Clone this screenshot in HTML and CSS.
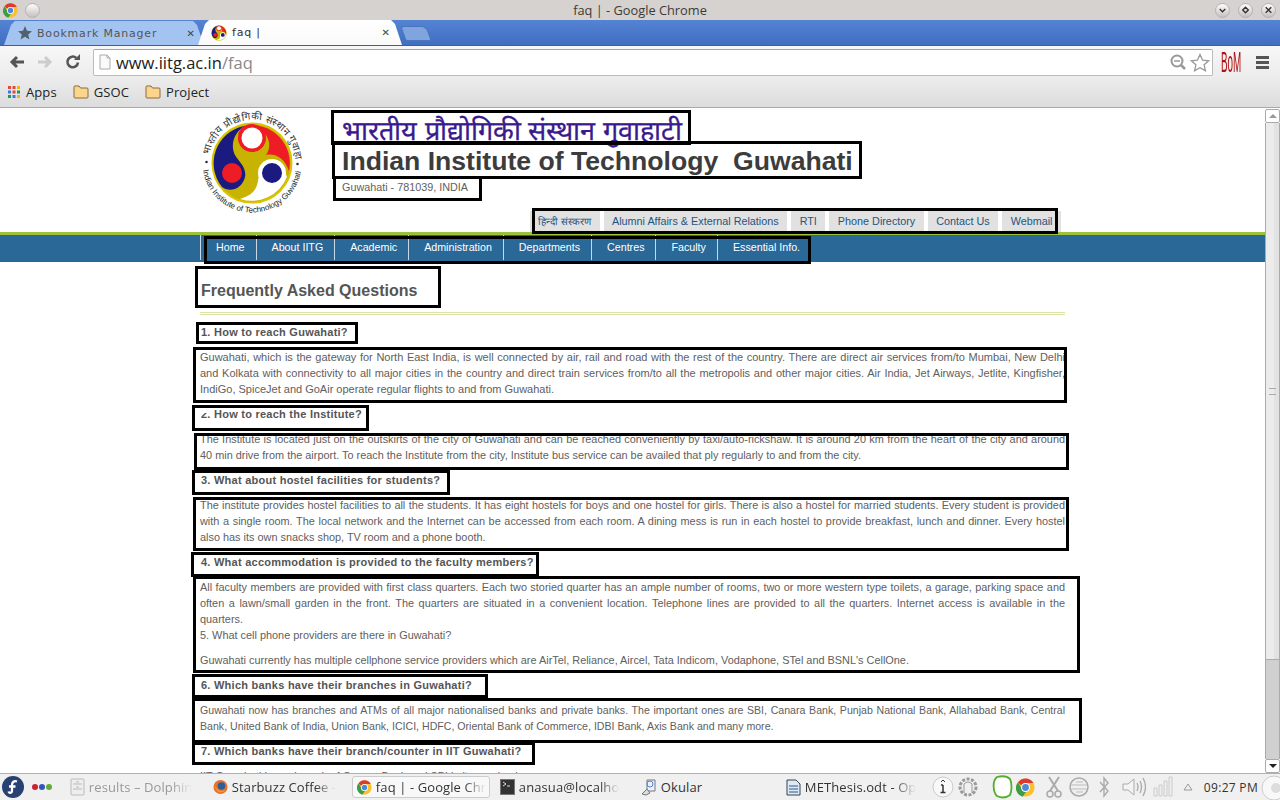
FILE: index.html
```html
<!DOCTYPE html>
<html lang="en">
<head>
    <meta charset="UTF-8">
    <title>faq | - Google Chrome</title>
    <link rel="stylesheet" href="styles.css">
</head>
<body>
    <svg class="defs" width="0" height="0">
        <symbol id="chrome" viewBox="0 0 24 24">
            <circle cx="12" cy="12" r="11.5" fill="#fbc02d"/>
            <path d="M12 .5a11.500 11.500 0 0 1 10 5.800H12a5.700 5.700 0 0 0-5.200 3.300L2.500 5.300A11.500 11.500 0 0 1 12 .5z" fill="#dd3b2f"/>
            <path d="M2.500 5.300l4.300 7.600a5.700 5.700 0 0 0 5.700 4.800l-4 6A11.500 11.500 0 0 1 2.500 5.300z" fill="#3b9e46"/>
            <circle cx="12" cy="12" r="5.600" fill="#fff"/>
            <circle cx="12" cy="12" r="4.300" fill="#4a89dc"/>
        </symbol>
        <symbol id="folder" viewBox="0 0 16 14">
            <path d="M1 3V2q0-1 1-1h4l1.500 2H14q1 0 1 1v8q0 1-1 1H2q-1 0-1-1z" fill="#fbd58c" stroke="#8d6a3c"/>
        </symbol>
        <symbol id="iitg-mark" viewBox="0 0 104 104">
            <circle cx="52" cy="53" r="39.500" fill="#c8b400" stroke="#d8c400" stroke-width="2"/>
            <path d="M44 16A38 38 0 0 1 89 61C85 49 76 43 66 45A15 15 0 0 0 38 25C39 21 41 18 44 16z" fill="#ee1c25"/>
            <circle cx="52" cy="28" r="14" fill="#ee1c25"/>
            <circle cx="52" cy="28" r="10.500" fill="#fff"/>
            <path d="M44 16A38 38 0 0 0 22 77C30 83 42 79 45 67C47 57 38 51 35 45C30 35 34 23 44 16z" fill="#1a1a80"/>
            <circle cx="32" cy="63" r="10" fill="#ee1c25"/>
            <path d="M40 89C52 85 56 81 58 71A15 15 0 0 1 87 67A38 38 0 0 1 40 89z" fill="#fff"/>
            <circle cx="72" cy="63" r="14" fill="#fff"/>
            <circle cx="72" cy="63" r="10" fill="#1a1a80"/>
        </symbol>
    </svg>

    <div class="window">
        <div class="titlebar">
            <svg class="title-icon" width="15" height="15"><use href="#chrome"/></svg>
            <span class="win-btn win-pin"></span>
            <span class="title-text">faq | - Google Chrome</span>
            <span class="win-btn">
                <svg width="14" height="14" viewBox="0 0 14 14"><path d="M4 6l3 3 3-3" fill="none" stroke="#333" stroke-width="1.500"/></svg>
            </span>
            <span class="win-btn">
                <svg width="14" height="14" viewBox="0 0 14 14"><path d="M7 4l3 3-3 3-3-3z" fill="none" stroke="#333" stroke-width="1.500"/></svg>
            </span>
            <span class="win-btn">
                <svg width="14" height="14" viewBox="0 0 14 14"><path d="M4 4l6 6M10 4l-6 6" fill="none" stroke="#333" stroke-width="1.500"/></svg>
            </span>
        </div>

        <div class="tabstrip">
            <div class="tab tab-back">
                <svg width="14" height="14" viewBox="0 0 14 14"><path d="M7 0l2 4.800 5 .4-3.800 3.300 1.200 5L7 10.800l-4.400 2.700 1.200-5L0 5.200l5-.4z" fill="#55606e"/></svg>
                <span class="tab-label">Bookmark Manager</span>
                <span class="tab-close">✕</span>
            </div>
            <div class="tab tab-active">
                <svg class="favicon" width="16" height="16" viewBox="10 11 84 84"><use href="#iitg-mark" width="104" height="104"/></svg>
                <span class="tab-label">faq |</span>
                <span class="tab-close">✕</span>
            </div>
            <div class="tab-new"></div>
        </div>

        <div class="toolbar">
            <svg class="tool" width="18" height="16" viewBox="0 0 18 16"><path d="M16 8H5M9 3L4 8l5 5" fill="none" stroke="#555" stroke-width="3"/></svg>
            <svg class="tool" width="18" height="16" viewBox="0 0 18 16"><path d="M2 8h11M9 3l5 5-5 5" fill="none" stroke="#ccc" stroke-width="3"/></svg>
            <svg class="tool" width="18" height="16" viewBox="0 0 18 16"><path d="M14 8.500A5.300 5.300 0 1 1 12.300 4" fill="none" stroke="#555" stroke-width="2.500"/><path d="M10 6h6V0z" fill="#555"/></svg>
            <div class="omnibox">
                <svg width="12" height="16" viewBox="0 0 12 16"><path d="M1 1h7l3 3v11H1z" fill="#fafafa" stroke="#aaa"/><path d="M8 1v3h3" fill="none" stroke="#aaa"/></svg>
                <span class="url">www.iitg.ac.in<span class="url-path">/faq</span></span>
                <svg width="18" height="18" viewBox="0 0 18 18"><circle cx="8" cy="8" r="5.500" fill="none" stroke="#999" stroke-width="2"/><path d="M12 12l4 4" stroke="#999" stroke-width="2.500"/><path d="M5 8h6" stroke="#999" stroke-width="1.500"/></svg>
                <svg width="20" height="19" viewBox="0 0 20 19"><path d="M10 1.500l2.600 5.700 6 .6-4.500 4 1.300 6L10 14.700l-5.400 3.100 1.300-6-4.500-4 6-.6z" fill="#fff" stroke="#999" stroke-width="1.300"/></svg>
            </div>
            <span class="bom">BoM</span>
            <span class="menu-lines"><i></i><i></i><i></i></span>
        </div>

        <div class="bookmarks">
            <span class="bookmark">
                <svg width="14" height="14" viewBox="0 0 14 14">
                    <rect x="1" y="1" width="3" height="3" fill="#dd4b39"/><rect x="5.500" y="1" width="3" height="3" fill="#dd4b39"/><rect x="10" y="1" width="3" height="3" fill="#f4b400"/>
                    <rect x="1" y="5.500" width="3" height="3" fill="#3b78e7"/><rect x="5.500" y="5.500" width="3" height="3" fill="#dd4b39"/><rect x="10" y="5.500" width="3" height="3" fill="#0f9d58"/>
                    <rect x="1" y="10" width="3" height="3" fill="#0f9d58"/><rect x="5.500" y="10" width="3" height="3" fill="#3b78e7"/><rect x="10" y="10" width="3" height="3" fill="#f4b400"/>
                </svg>
                <span>Apps</span>
            </span>
            <span class="bookmark"><svg width="16" height="14"><use href="#folder"/></svg><span>GSOC</span></span>
            <span class="bookmark"><svg width="16" height="14"><use href="#folder"/></svg><span>Project</span></span>
        </div>

        <div class="viewport">
            <div class="page">
                <div class="site-head">
                    <svg class="site-logo" width="104" height="104" viewBox="0 0 104 104">
                        <use href="#iitg-mark" width="104" height="104"/>
                        <path id="ring-top" d="M9.700 45A43 43 0 0 1 94.900 50" fill="none"/>
                        <path id="ring-bottom" d="M3 60A49.500 49.500 0 0 0 101 60" fill="none"/>
                        <circle cx="6.500" cy="52" r="1.300" fill="#333"/>
                        <circle cx="97.500" cy="54" r="1.300" fill="#333"/>
                        <text class="logo-text"><textPath href="#ring-top">भारतीय प्रौद्योगिकी संस्थान गुवाहाटी</textPath></text>
                        <text class="logo-text logo-text-en"><textPath href="#ring-bottom">Indian Institute of Technology Guwahati</textPath></text>
                    </svg>
                    <div class="site-names">
                        <div class="name-hi">भारतीय प्रौद्योगिकी संस्थान गुवाहाटी</div>
                        <div class="name-en">Indian Institute of Technology&nbsp; Guwahati</div>
                        <div class="name-addr">Guwahati - 781039, INDIA</div>
                    </div>
                </div>
                <div class="top-links">
                    <a class="link-hi">हिन्दी संस्करण</a>
                    <a>Alumni Affairs &amp; External Relations</a>
                    <a>RTI</a>
                    <a>Phone Directory</a>
                    <a>Contact Us</a>
                    <a>Webmail</a>
                </div>
                <div class="main-nav">
                    <div class="main-nav-inner">
                        <a>Home</a>
                        <a>About IITG</a>
                        <a>Academic</a>
                        <a>Administration</a>
                        <a>Departments</a>
                        <a>Centres</a>
                        <a>Faculty</a>
                        <a>Essential Info.</a>
                    </div>
                </div>
                <div class="content">
                    <h1>Frequently Asked Questions</h1>
                    <div class="rule"></div>
                    <h3>1. How to reach Guwahati?</h3>
                    <p class="answer-wide">Guwahati, which is the gateway for North East India, is well connected by air, rail and road with the rest of the country. There are direct air services from/to Mumbai, New Delhi and Kolkata with connectivity to all major cities in the country and direct train services from/to all the metropolis and other major cities. Air India, Jet Airways, Jetlite, Kingfisher, IndiGo, SpiceJet and GoAir operate regular flights to and from Guwahati.</p>
                    <h3>2. How to reach the Institute?</h3>
                    <p>The Institute is located just on the outskirts of the city of Guwahati and can be reached conveniently by taxi/auto-rickshaw. It is around 20 km from the heart of the city and around 40 min drive from the airport. To reach the Institute from the city, Institute bus service can be availed that ply regularly to and from the city.</p>
                    <h3>3. What about hostel facilities for students?</h3>
                    <p>The institute provides hostel facilities to all the students. It has eight hostels for boys and one hostel for girls. There is also a hostel for married students. Every student is provided with a single room. The local network and the Internet can be accessed from each room. A dining mess is run in each hostel to provide breakfast, lunch and dinner. Every hostel also has its own snacks shop, TV room and a phone booth.</p>
                    <h3>4. What accommodation is provided to the faculty members?</h3>
                    <p>All faculty members are provided with first class quarters. Each two storied quarter has an ample number of rooms, two or more western type toilets, a garage, parking space and often a lawn/small garden in the front. The quarters are situated in a convenient location. Telephone lines are provided to all the quarters. Internet access is available in the quarters.<br>5. What cell phone providers are there in Guwahati?</p>
                    <p>Guwahati currently has multiple cellphone service providers which are AirTel, Reliance, Aircel, Tata Indicom, Vodaphone, STel and BSNL's CellOne.</p>
                    <h3>6. Which banks have their branches in Guwahati?</h3>
                    <p class="answer-tight">Guwahati now has branches and ATMs of all major nationalised banks and private banks. The important ones are SBI, Canara Bank, Punjab National Bank, Allahabad Bank, Central Bank, United Bank of India, Union Bank, ICICI, HDFC, Oriental Bank of Commerce, IDBI Bank, Axis Bank and many more.</p>
                    <h3>7. Which banks have their branch/counter in IIT Guwahati?</h3>
                    <p>IIT Guwahati has a branch of Canara Bank and SBI in its academic area.</p>
                </div>

                <div class="mark-patch"></div>
                <div class="mark mark-hi"></div>
                <div class="mark mark-en"></div>
                <div class="mark mark-addr"></div>
                <div class="mark mark-links"></div>
                <div class="mark mark-nav"></div>
                <div class="mark mark-title"></div>
                <div class="mark mark-q1"></div>
                <div class="mark mark-a1"></div>
                <div class="mark mark-q2"></div>
                <div class="mark mark-a2"></div>
                <div class="mark mark-q3"></div>
                <div class="mark mark-a3"></div>
                <div class="mark mark-q4"></div>
                <div class="mark mark-a4"></div>
                <div class="mark mark-q6"></div>
                <div class="mark mark-a6"></div>
                <div class="mark mark-q7"></div>
            </div>
            <div class="scrollbar">
                <div class="sb-btn"><i class="sb-up"></i></div>
                <div class="sb-thumb"><span class="sb-grip"></span></div>
                <div class="sb-track"></div>
                <div class="sb-btn"><i class="sb-down"></i></div>
            </div>
        </div>

        <div class="taskbar">
            <svg class="fedora" width="22" height="22" viewBox="0 0 22 22"><circle cx="11" cy="11" r="11" fill="#294172"/><path d="M15 5.500c-3-1-5 .5-5 3.500v6c0 2-3 2.500-3.500.5M7 10.500h6.500" fill="none" stroke="#fff" stroke-width="2.300"/></svg>
            <span class="dots"><i class="dot-red"></i><i class="dot-blue"></i><i class="dot-green"></i></span>
            <div class="task task-dolphin">
                <svg width="15" height="18" viewBox="0 0 15 18"><rect x="1" y="1" width="13" height="16" rx="1" fill="#eee" stroke="#bbb"/><path d="M3 6h9M3 11h9M6 4h3M6 9h3" stroke="#bbb"/></svg>
                <span class="task-label task-dim">results – Dolphin</span>
            </div>
            <div class="task task-firefox">
                <svg width="15" height="16" viewBox="0 0 16 16"><circle cx="8" cy="8" r="7.500" fill="#e8712a"/><circle cx="9" cy="7" r="4" fill="#2f5d9b"/><path d="M2 5c1 6 6 9 11 6-3 5-11 3-11-6z" fill="#f6a02c"/></svg>
                <span class="task-label">Starbuzz Coffee -</span>
            </div>
            <div class="task task-chrome">
                <svg width="15" height="15"><use href="#chrome"/></svg>
                <span class="task-label">faq | - Google Chr</span>
            </div>
            <div class="task task-term">
                <svg width="15" height="16" viewBox="0 0 15 16"><rect x=".5" y=".5" width="14" height="15" fill="#333" stroke="#777"/><path d="M3 3l3 2-3 2M7 7h3" fill="none" stroke="#ddd"/></svg>
                <span class="task-label">anasua@localho</span>
            </div>
            <div class="task task-okular">
                <svg width="16" height="17" viewBox="0 0 16 17"><path d="M6 1h8v11H6z" fill="#eef" stroke="#777"/><circle cx="9" cy="5" r="3" fill="none" stroke="#4a89dc"/><path d="M1 15l5-5 3 4-4 2z" fill="#ddd" stroke="#777"/></svg>
                <span class="task-label task-plain">Okular</span>
            </div>
            <div class="task task-odt">
                <svg width="15" height="17" viewBox="0 0 15 17"><path d="M1 1h9l4 4v11H1z" fill="#dfe9f3" stroke="#345"/><path d="M3 7h9M3 10h9M3 13h9" stroke="#245a8c"/></svg>
                <span class="task-label">METhesis.odt - Op</span>
            </div>
            <div class="tray">
                <svg width="22" height="22" viewBox="0 0 22 22"><circle cx="11" cy="11" r="10" fill="#f8f8f8" stroke="#ccc"/><path d="M11 9v7M8.500 16.500h5M9 9h2" stroke="#333" stroke-width="1.500"/><path d="M9 6l2-2 2 2" fill="none" stroke="#333"/></svg>
                <svg class="tray-gear" width="22" height="22" viewBox="0 0 22 22"><circle cx="11" cy="11" r="8" fill="none" stroke="#999" stroke-width="3" stroke-dasharray="3 1.500"/><path d="M7 17V8q4-4 8 0v9" fill="none" stroke="#999"/></svg>
                <svg class="tray-skype" width="22" height="24" viewBox="0 0 22 24"><path d="M6 2c4-1 10-1 13 2 2 4 2 12 0 16-4 3-9 3-13 1-4-4-5-15 0-19z" fill="#fff" stroke="#55ad2c" stroke-width="1.800"/></svg>
                <svg class="tray-chrome" width="19" height="19"><use href="#chrome"/></svg>
                <svg class="tray-cut" width="16" height="22" viewBox="0 0 16 22"><path d="M3 1l9 14M13 1L4 15" stroke="#aaa" stroke-width="2"/><circle cx="4" cy="18" r="3" fill="none" stroke="#aaa" stroke-width="1.500"/><circle cx="12" cy="18" r="3" fill="none" stroke="#aaa" stroke-width="1.500"/></svg>
                <svg width="20" height="20" viewBox="0 0 20 20"><circle cx="10" cy="10" r="9" fill="none" stroke="#aaa" stroke-width="1.500"/><path d="M2 8h16M2 12h16M7 5h7M7 15h7" stroke="#bbb"/></svg>
                <svg class="tray-bt" width="10" height="22" viewBox="0 0 10 22"><path d="M1 6l8 9-4 5V2l4 5-8 9" fill="none" stroke="#aaa" stroke-width="1.400"/></svg>
                <svg class="tray-vol" width="24" height="22" viewBox="0 0 24 22"><path d="M1 8h5l6-5v16l-6-5H1z" fill="#f4f4f4" stroke="#aaa"/><path d="M15 7q2 4 0 8M18 5q3 6 0 12M21 2q5 9 0 18" fill="none" stroke="#aaa" stroke-width="1.300"/></svg>
                <svg width="20" height="22" viewBox="0 0 20 22"><path d="M1 12h3v8H1zM6 9h3v11H6zM11 5h3v15h-3zM16 1h3v19h-3z" fill="#eee" stroke="#ccc"/></svg>
                <svg class="tray-up" width="10" height="8" viewBox="0 0 10 8"><path d="M1 7l4-6 4 6z" fill="none" stroke="#999"/></svg>
                <span class="clock">09:27 PM</span>
                <svg class="gauge" width="20" height="25" viewBox="0 0 20 25"><circle cx="14" cy="13" r="12" fill="#f8f8f8" stroke="#ccc"/><circle cx="16" cy="13" r="5" fill="#ddd"/></svg>
            </div>
        </div>
    </div>
</body>
</html>
```

FILE: styles.css
```css
* {
    box-sizing: border-box;
    margin: 0;
    padding: 0;
}

html, body {
    height: 100%;
    overflow: hidden;
}

body {
    font-family: "Liberation Sans", Arial, sans-serif;
    background: #fff;
}

.defs {
    position: absolute;
}

.window {
    width: 1280px;
    height: 800px;
    display: flex;
    flex-direction: column;
}

/* browser chrome */
.titlebar {
    height: 20px;
    background: #d6d2cf;
    display: flex;
    align-items: center;
    padding: 0 4px 0 3px;
    gap: 8px;
    flex-shrink: 0;
}

.title-icon {
    flex-shrink: 0;
}

.title-text {
    flex: 1;
    text-align: center;
    font: 12.800px "Open Sans", sans-serif;
    color: #3a3a3a;
    padding-left: 25px;
}

.win-btn {
    width: 15px;
    height: 15px;
    border-radius: 50%;
    background: linear-gradient(#fdfdfd, #c4c1be);
    border: 1px solid #b5b2af;
    display: flex;
    align-items: center;
    justify-content: center;
    flex-shrink: 0;
}

.win-pin {
    margin-left: -1px;
}

.tabstrip {
    height: 26px;
    background: linear-gradient(#5583d4, #3f6ec2);
    border-bottom: 1px solid #3560a8;
    display: flex;
    align-items: flex-end;
    padding-left: 4px;
    flex-shrink: 0;
}

.tab {
    height: 24px;
    display: flex;
    align-items: center;
    gap: 5px;
    font: 11px "DejaVu Sans", sans-serif;
    letter-spacing: 0.8px;
    clip-path: polygon(0 100%, 7px 4px, 11px 0, calc(100% - 11px) 0, calc(100% - 7px) 4px, 100% 100%);
}

.tab-back {
    width: 200px;
    padding: 0 9px 0 14px;
    background: #a3c4f0;
    color: #555;
}

.tab-active {
    width: 204px;
    margin-left: -6px;
    padding: 0 12px 0 13px;
    background: linear-gradient(#fff, #fafafa);
    color: #333;
    height: 25px;
}

.favicon {
    flex-shrink: 0;
}

.tab-label {
    flex: 1;
    white-space: nowrap;
}

.tab-close {
    font-size: 10px;
    letter-spacing: 0;
    color: #444;
}

.tab-new {
    width: 26px;
    height: 15px;
    margin: 0 0 4px 1px;
    background: #7fa4de;
    border: 1px solid #4a74bb;
    border-radius: 3px 5px 2px 2px;
    transform: skewX(20deg);
}

.toolbar {
    height: 32px;
    background: linear-gradient(#f7f7f7, #ececec);
    display: flex;
    align-items: center;
    padding: 0 9px 0 8px;
    flex-shrink: 0;
}

.tool {
    margin-right: 10px;
    flex-shrink: 0;
}

.omnibox {
    width: 1120px;
    height: 27px;
    margin-left: 1px;
    background: #fff;
    border: 1px solid #bbb;
    border-top-color: #a5a5a5;
    border-radius: 2px;
    display: flex;
    align-items: center;
    gap: 3px;
    padding: 0 2px 0 5px;
    flex-shrink: 0;
}

.url {
    flex: 1;
    margin-left: 2px;
    font: 16.500px "Open Sans", sans-serif;
    color: #222;
}

.url-path {
    color: #888;
}

.bom {
    margin-left: 8px;
    width: 21px;
    font: 29px/1 "Liberation Sans", sans-serif;
    color: #b01010;
    transform: scaleX(0.34);
    transform-origin: left center;
}

.menu-lines {
    margin-left: 14px;
    display: flex;
    flex-direction: column;
    gap: 2px;
}

.menu-lines i {
    display: block;
    width: 13px;
    height: 3px;
    background: #555;
}

.bookmarks {
    height: 30px;
    background: linear-gradient(#ececec, #dcdcdc);
    border-bottom: 1px solid #a9a9a9;
    display: flex;
    align-items: center;
    padding: 0 0 2px 7px;
    gap: 16px;
    flex-shrink: 0;
}

.bookmark {
    display: flex;
    align-items: center;
    gap: 5px;
    font: 13px "Open Sans", sans-serif;
    letter-spacing: 0.1px;
    color: #222;
}

/* page */
.viewport {
    height: 665px;
    display: flex;
    flex-shrink: 0;
    overflow: hidden;
}

.page {
    position: relative;
    width: 1265px;
    height: 665px;
    overflow: hidden;
    color: #606060;
}

.site-head {
    width: 865px;
    height: 103px;
    margin: 0 auto;
    display: flex;
}

.site-logo {
    margin-top: 2px;
    flex-shrink: 0;
}

.logo-text {
    font: 10px "Liberation Sans", sans-serif;
    fill: #333;
}

.logo-text-en {
    font-size: 8px;
    fill: #222;
}

.site-names {
    margin-left: 38px;
}

.name-hi {
    height: 35px;
    font-size: 27px;
    line-height: 47px;
    color: #3a1a8c;
    -webkit-text-stroke: 0.3px #3a1a8c;
    white-space: nowrap;
}

.name-en {
    height: 36px;
    font-size: 26.600px;
    font-weight: bold;
    line-height: 36px;
    color: #3c3c3c;
    white-space: nowrap;
}

.name-addr {
    font-size: 10.800px;
    line-height: 16px;
}

.top-links {
    width: 865px;
    margin: 0 auto;
    height: 21px;
    display: flex;
    justify-content: flex-end;
    gap: 4px;
    padding-right: 4px;
}

.top-links a {
    background: #e1e1e1;
    color: #1f5480;
    font-size: 10.800px;
    line-height: 21px;
    padding: 0 8.500px;
    white-space: nowrap;
}

.top-links .link-hi {
    font-size: 10px;
}

.main-nav {
    height: 30px;
    border-top: 3px solid #9cc23c;
    background: #2a6898;
    background-clip: padding-box;
}

.main-nav-inner {
    width: 865px;
    margin: 0 auto;
    height: 25px;
    display: flex;
    border-left: 1px solid #c9d8e6;
}

.main-nav-inner a {
    color: #fff;
    font-size: 10.700px;
    line-height: 24px;
    padding: 0 11px 0 15px;
    border-right: 1px solid #c9d8e6;
    white-space: nowrap;
}

.main-nav-inner a:last-child {
    border-right: 0;
}

.content {
    width: 865px;
    margin: 0 auto;
    font-size: 10.900px;
    line-height: 16px;
}

h1 {
    font-size: 16px;
    line-height: 20px;
    margin-top: 19px;
    padding-left: 1px;
    color: #555;
}

.rule {
    height: 3px;
    margin-top: 11px;
    border-top: 1px solid #dde3a8;
    border-bottom: 1px solid #dde3a8;
}

h3 {
    font-size: 11px;
    letter-spacing: 0.25px;
    margin: 9px 0;
    padding-left: 1px;
    color: #555;
}

.content p {
    text-align: justify;
    margin: 9px 0;
}

.content .answer-wide {
    font-size: 11px;
}

.content .answer-tight {
    font-size: 10.600px;
}

/* black annotation boxes drawn over the shot */
.mark {
    position: absolute;
    border: 3px solid #000;
    pointer-events: none;
}

.mark-hi { left: 331px; top: 2px; width: 360px; height: 35px; }
.mark-en { left: 332px; top: 33px; width: 530px; height: 38px; }
.mark-addr { left: 333px; top: 68px; width: 149px; height: 25px; }
.mark-links { left: 532px; top: 100px; width: 526px; height: 26px; }
.mark-nav { left: 204px; top: 128px; width: 607px; height: 28px; }
.mark-title { left: 195px; top: 158px; width: 246px; height: 42px; }
.mark-q1 { left: 196px; top: 214px; width: 162px; height: 22px; }
.mark-a1 { left: 193px; top: 239px; width: 874px; height: 56px; }
.mark-q2 { left: 192px; top: 297px; width: 177px; height: 26px; }
.mark-a2 { left: 194px; top: 325px; width: 875px; height: 37px; }
.mark-q3 { left: 192px; top: 362px; width: 258px; height: 25px; }
.mark-a3 { left: 193px; top: 389px; width: 876px; height: 54px; }
.mark-q4 { left: 191px; top: 444px; width: 348px; height: 25px; }
.mark-a4 { left: 193px; top: 468px; width: 887px; height: 97px; }
.mark-q6 { left: 192px; top: 566px; width: 296px; height: 24px; }
.mark-a6 { left: 192px; top: 590px; width: 890px; height: 45px; }
.mark-q7 { left: 192px; top: 634px; width: 343px; height: 23px; }

/* the box painted over the top of the "2" */
.mark-patch {
    position: absolute;
    left: 199px;
    top: 300px;
    width: 8px;
    height: 5px;
    background: #fff;
}

.scrollbar {
    width: 15px;
    height: 665px;
    display: flex;
    flex-direction: column;
    padding-top: 1px;
}

.sb-btn {
    height: 14px;
    background: #fff;
    border: 1px solid #aaa;
    border-radius: 2px;
    display: flex;
    align-items: center;
    justify-content: center;
    flex-shrink: 0;
}

.sb-up, .sb-down {
    width: 0;
    height: 0;
    border-left: 4px solid transparent;
    border-right: 4px solid transparent;
}

.sb-up {
    border-bottom: 4px solid #999;
}

.sb-down {
    border-top: 4px solid #222;
}

.sb-thumb {
    height: 537px;
    background: linear-gradient(to right, #ececec 60%, #e2e2e2 60%);
    border-left: 1px solid #aaa;
    border-right: 1px solid #aaa;
    border-bottom: 1px solid #aaa;
    display: flex;
    align-items: center;
    justify-content: center;
    flex-shrink: 0;
}

.sb-grip {
    width: 7px;
    height: 7px;
    border-top: 1px solid #aaa;
    border-bottom: 1px solid #aaa;
}

.sb-track {
    flex: 1;
    background: #d0d0d0;
    border-left: 1px solid #aaa;
    border-right: 1px solid #aaa;
}

/* desktop panel */
.taskbar {
    height: 27px;
    background: #f0f0f0;
    border-top: 1px solid #b0b0b0;
    display: flex;
    align-items: center;
    padding-left: 2px;
    font: 13px "Open Sans", sans-serif;
    color: #333;
    flex-shrink: 0;
    overflow: hidden;
}

.fedora {
    flex-shrink: 0;
}

.dots {
    display: flex;
    gap: 1px;
    margin-left: 8px;
    width: 38px;
}

.dots i {
    width: 6px;
    height: 6px;
    border-radius: 50%;
}

.dot-red { background: #cc2233; }
.dot-blue { background: #3355bb; }
.dot-green { background: #66aa33; }

.task {
    display: flex;
    align-items: center;
    gap: 4px;
    height: 22px;
    flex-shrink: 0;
}

.task svg {
    flex-shrink: 0;
}

.task-label {
    white-space: nowrap;
    letter-spacing: 0.1px;
    -webkit-mask-image: linear-gradient(to right, #000 80%, transparent);
    mask-image: linear-gradient(to right, #000 80%, transparent);
}

.task-plain {
    -webkit-mask-image: none;
    mask-image: none;
}

.task-dim {
    color: #999;
}

.task-dolphin { width: 143px; }
.task-firefox { width: 139px; }

.task-chrome {
    width: 138px;
    padding: 0 2px 0 4px;
    border: 1px solid #ccc;
    border-radius: 3px;
    background: #f8f8f8;
}

.task-term { width: 141px; margin-left: 10px; }
.task-okular { width: 145px; }
.task-odt { width: 146px; }

.tray {
    display: flex;
    align-items: center;
    gap: 7px;
    color: #333;
}

.tray-gear {
    margin-left: -4px;
}

.tray-skype {
    margin-left: 5px;
}

.tray-chrome {
    margin-left: -4px;
}

.tray-cut {
    margin-left: 4px;
}

.tray-bt {
    margin-left: 3px;
}

.tray-vol {
    margin-left: 6px;
}

.tray-up {
    margin-left: 3px;
}

.clock {
    font-size: 12px;
    letter-spacing: 0.3px;
    margin-left: 4px;
    white-space: nowrap;
}

.gauge {
    margin-left: -5px;
}
```
